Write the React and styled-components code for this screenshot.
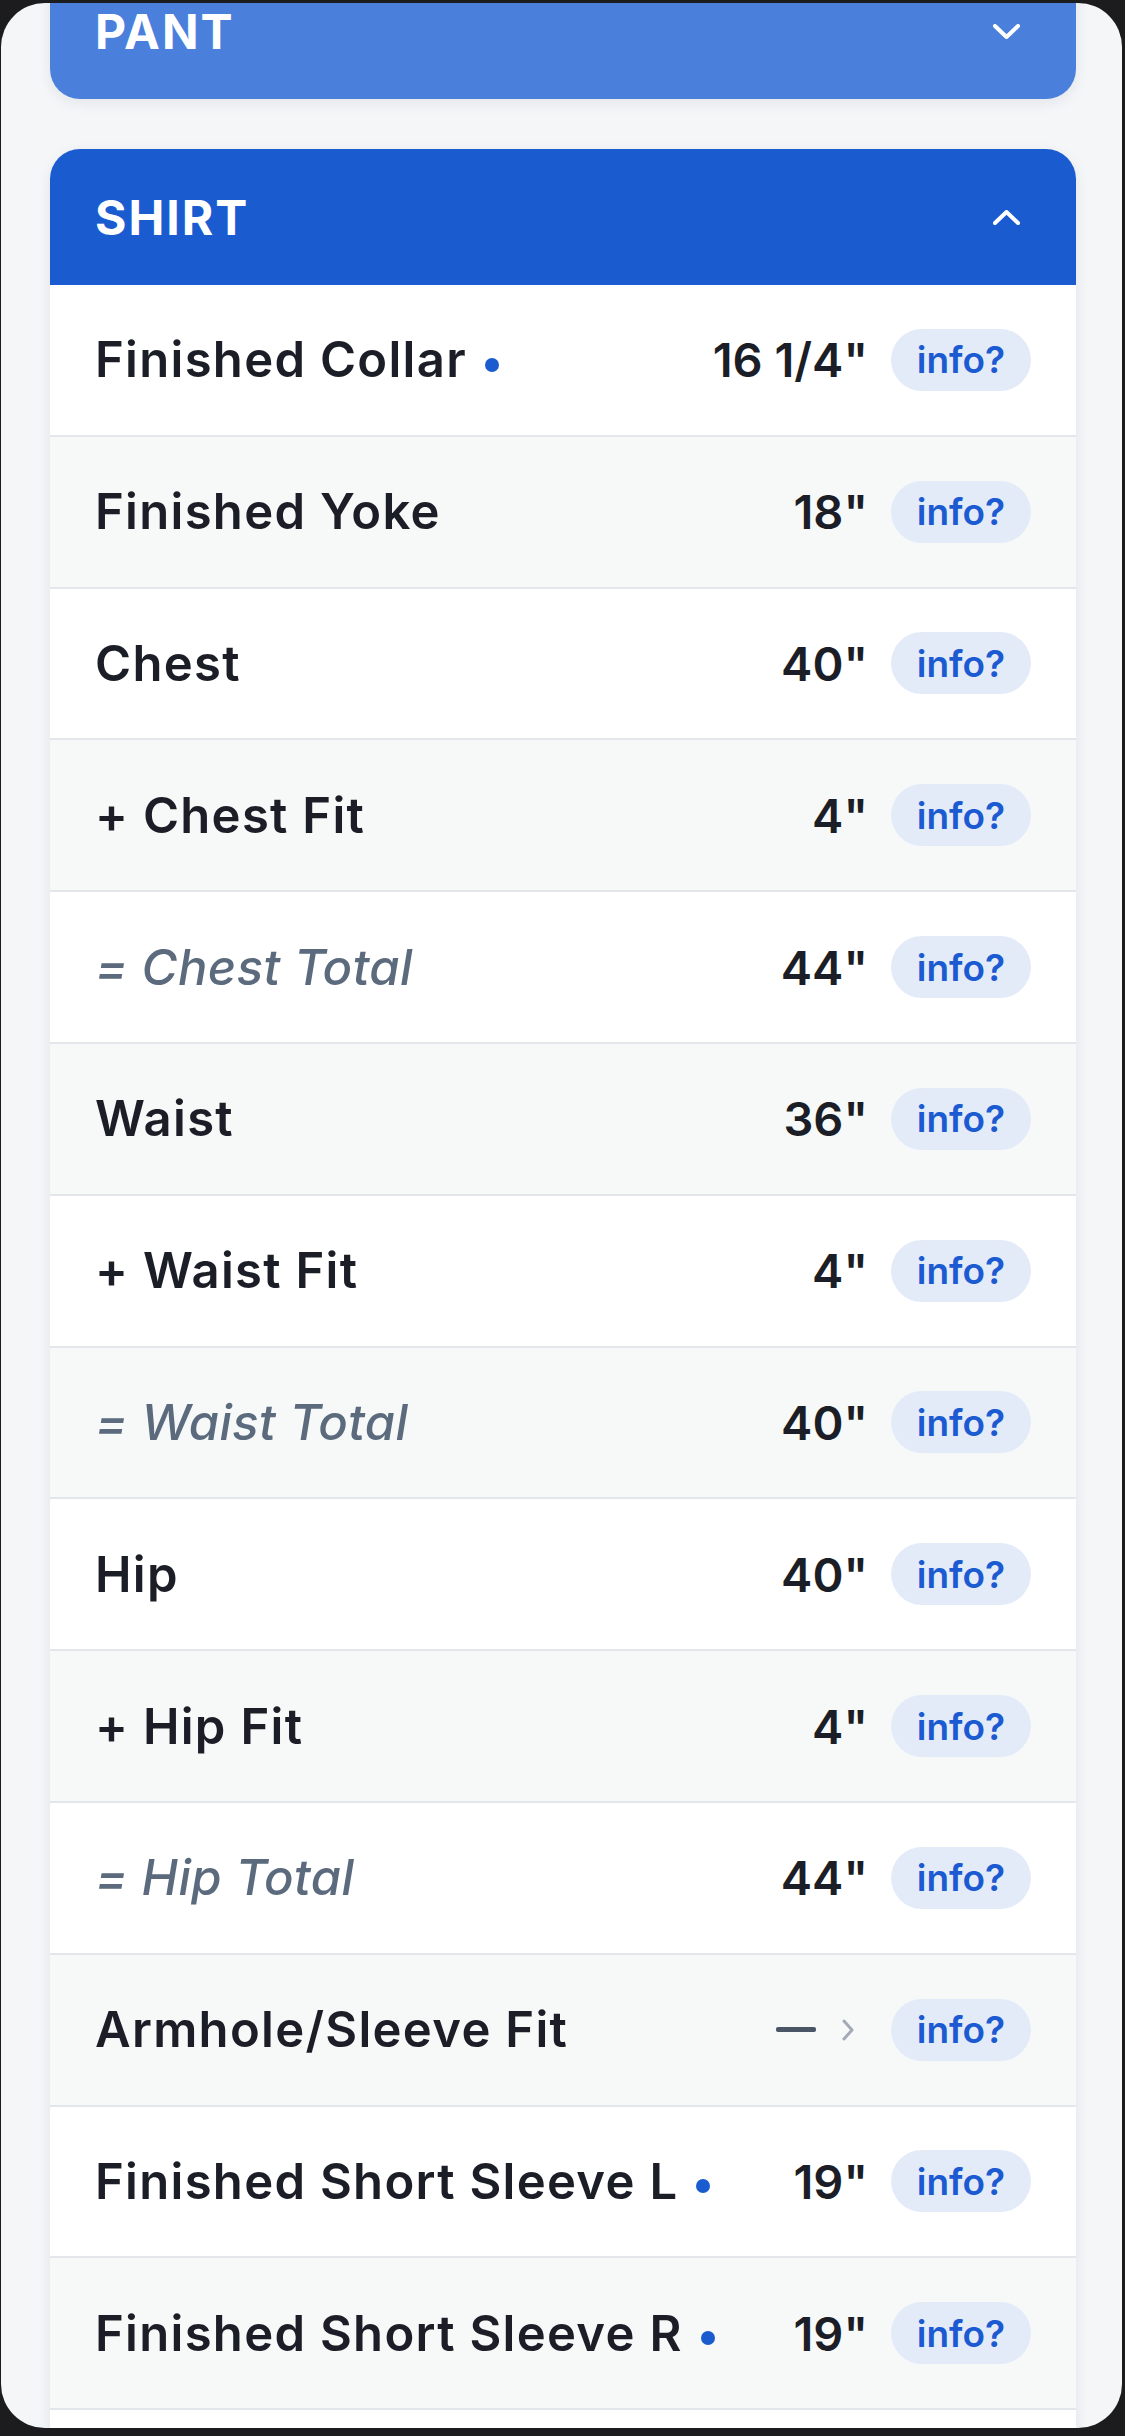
import React from 'react';
import styled, { createGlobalStyle } from "styled-components";

const GlobalStyle = createGlobalStyle`
  html, body {
    margin: 0;
    padding: 0;
    background: #1c1c1e;
  }
  body {
    font-family: Inter, "Noto Sans", sans-serif;
  }
`;

const Frame = styled.div`
  width: 1125px;
  height: 2436px;
  padding: 3px 3px 8px 1px;
  box-sizing: border-box;
  background: #1c1c1e;
`;

const Screen = styled.div`
  height: 100%;
  border-radius: 44px;
  overflow: hidden;
  background: #f4f6f8;
  padding: 0 46px 0 49px;
  box-sizing: border-box;
`;

const Stack = styled.div`
  display: flex;
  flex-direction: column;
  gap: 50px;
  margin-top: -40px;
`;

const Card = styled.section`
  border-radius: ${p => (p.$open ? "30px 30px 0 0" : "30px")};
  overflow: hidden;
  background: #fff;
  box-shadow: 0 4px 14px rgba(20, 40, 80, 0.08);
`;

const Header = styled.div`
  height: 136px;
  display: flex;
  align-items: center;
  justify-content: space-between;
  padding: 0 56px 0 45px;
  background: ${p => (p.$open ? "#1a5ccf" : "#4a80db")};
  color: #fff;
  font-size: 48px;
  font-weight: 700;
  letter-spacing: 2px;
`;

const Row = styled.div`
  height: 149.8px;
  display: flex;
  align-items: center;
  padding: 0 45px;
  background: ${p => (p.$alt ? "#f7f9f9" : "#ffffff")};
  border-bottom: 2px solid #e3e7ec;
`;

const Label = styled.div`
  flex: 1;
  display: flex;
  align-items: center;
  font-size: 49px;
  letter-spacing: ${p => (p.$total ? "0.4px" : "1.3px")};
  font-weight: ${p => (p.$total ? 500 : 600)};
  font-style: ${p => (p.$total ? "italic" : "normal")};
  color: ${p => (p.$total ? "#5c6a7e" : "#1b1e26")};
  white-space: nowrap;
`;

const Dot = styled.span`
  width: 14px;
  height: 14px;
  border-radius: 50%;
  background: #1a5ccf;
  margin-left: 18px;
  margin-top: 10px;
`;

const Value = styled.div`
  display: flex;
  align-items: center;
  gap: 26px;
  font-size: 47px;
  font-weight: 600;
  color: #1b1e26;
  margin-right: 23px;
`;

const Dash = styled.span`
  width: 40px;
  height: 5px;
  border-radius: 2px;
  background: #4a5566;
`;

const Info = styled.span`
  width: 140px;
  height: 62px;
  border-radius: 31px;
  background: #e4ebf8;
  color: #1b5ad0;
  font-size: 37px;
  font-weight: 600;
  display: flex;
  align-items: center;
  justify-content: center;
`;

const Chevron = ({ up }) => (
  <svg width="27" height="15" viewBox="0 0 27 15" fill="none">
    <polyline
      points={up ? "2,13 13.5,2 25,13" : "2,2 13.5,13 25,2"}
      stroke="#fff"
      strokeWidth="4"
      strokeLinecap="round"
      strokeLinejoin="round"
    />
  </svg>
);

const ChevronRight = () => (
  <svg width="12" height="22" viewBox="0 0 12 22" fill="none" style={{ marginRight: 14 }}>
    <polyline
      points="2,2 10,11 2,20"
      stroke="#a3abb6"
      strokeWidth="3"
      strokeLinecap="round"
      strokeLinejoin="round"
    />
  </svg>
);

const rows = [
  { label: "Finished Collar", value: "16 1/4\"", dot: true },
  { label: "Finished Yoke", value: "18\"" },
  { label: "Chest", value: "40\"" },
  { label: "+ Chest Fit", value: "4\"" },
  { label: "= Chest Total", value: "44\"", total: true },
  { label: "Waist", value: "36\"" },
  { label: "+ Waist Fit", value: "4\"" },
  { label: "= Waist Total", value: "40\"", total: true },
  { label: "Hip", value: "40\"" },
  { label: "+ Hip Fit", value: "4\"" },
  { label: "= Hip Total", value: "44\"", total: true },
  { label: "Armhole/Sleeve Fit", empty: true },
  { label: "Finished Short Sleeve L", value: "19\"", dot: true },
  { label: "Finished Short Sleeve R", value: "19\"", dot: true },
  { label: "", value: "" },
];

const App = () => {
  return (
    <>
      <GlobalStyle />
      <Frame>
        <Screen>
          <Stack>
            <Card>
              <Header>
                <span>PANT</span>
                <Chevron />
              </Header>
            </Card>
            <Card $open>
              <Header $open>
                <span>SHIRT</span>
                <Chevron up />
              </Header>
              {rows.map((r, i) => (
                <Row key={i} $alt={i % 2 === 1}>
                  <Label $total={r.total}>
                    {r.label}
                    {r.dot && <Dot />}
                  </Label>
                  {r.empty ? (
                    <Value>
                      <Dash />
                      <ChevronRight />
                    </Value>
                  ) : (
                    <Value>{r.value}</Value>
                  )}
                  {r.label && <Info>info?</Info>}
                </Row>
              ))}
            </Card>
          </Stack>
        </Screen>
      </Frame>
    </>
  );
};

export default App;
